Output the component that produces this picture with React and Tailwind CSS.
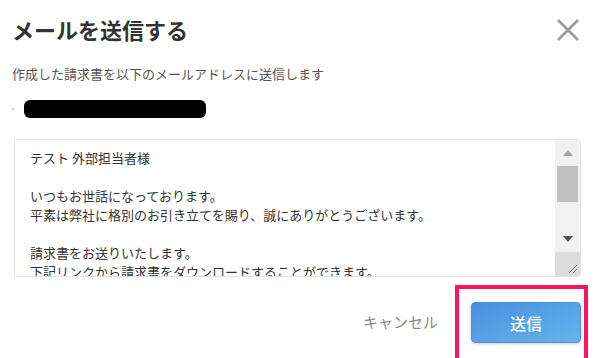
import React from "react";

const JP = { fontFamily: '"Noto Sans CJK JP", "Noto Sans", sans-serif' };

const BODY_LINES = [
  "テスト 外部担当者様",
  "",
  "いつもお世話になっております。",
  "平素は弊社に格別のお引き立てを賜り、誠にありがとうございます。",
  "",
  "請求書をお送りいたします。",
  "下記リンクから請求書をダウンロードすることができます。",
];

function CloseIcon() {
  return (
    <svg width="24" height="24" viewBox="0 0 24 24">
      <path d="M2 2 L22 22 M22 2 L2 22" stroke="#9a9a9a" strokeWidth="2.6" strokeLinecap="butt" />
    </svg>
  );
}

function FakeScrollbar() {
  return (
    <div className="flex w-[25px] flex-col bg-[#f1f1f1]">
      <div className="flex h-[26px] items-center justify-center">
        <svg width="10" height="6" viewBox="0 0 10 6"><path d="M0 6 L5 0 L10 6 Z" fill="#a3a3a3" /></svg>
      </div>
      <div className="mx-[2px] h-[36px] bg-[#c1c1c1]" />
      <div className="flex-1" />
      <div className="flex h-[26px] items-center justify-center">
        <svg width="10" height="6" viewBox="0 0 10 6"><path d="M0 0 L5 6 L10 0 Z" fill="#505050" /></svg>
      </div>
      <div className="relative h-[24px] bg-[#dcdcdc]">
        <svg className="absolute bottom-[2px] right-[2px]" width="12" height="12" viewBox="0 0 12 12">
          <path d="M11 3 L3 11 M11 7 L7 11" stroke="#777" strokeWidth="1" />
        </svg>
      </div>
    </div>
  );
}

export default function App() {
  return (
    <div className="relative h-[358px] w-[595px] overflow-hidden bg-white" style={JP}>
      <div className="flex h-full flex-col pl-[12px] pr-[14px] pt-[13px]">
        {/* header */}
        <div className="flex items-center justify-between">
          <h1 className="text-[22px] font-bold leading-[32px] text-[#333]">メールを送信する</h1>
          <button className="mr-[1px] mt-[2px]"><CloseIcon /></button>
        </div>

        <p className="mt-[19px] text-[13px] leading-[20px] text-[#555]">作成した請求書を以下のメールアドレスに送信します</p>

        {/* redacted address */}
        <div className="mt-[15px] flex h-[20px] items-center">
          <span className="h-[2px] w-[2px] rounded-full bg-[#bbb]" />
          <span className="ml-[10px] h-[18px] w-[182px] rounded-[6px] bg-black" />
        </div>

        {/* message box */}
        <div className="ml-[2px] mt-[20px] flex h-[138px] overflow-hidden rounded-[3px] border border-[#dfe5e5]">
          <div className="flex-1 overflow-hidden pl-[15px] pt-[8px] text-[13px] leading-[19px] text-[#333]">
            {BODY_LINES.map((l, i) => (
              <div key={i} className="h-[19px] whitespace-nowrap">{l}</div>
            ))}
          </div>
          <FakeScrollbar />
        </div>

        {/* footer */}
        <div className="mt-[25px] flex items-center justify-end gap-[33px]">
          <button className="text-[15px] text-[#888]">キャンセル</button>
          <button className="h-[41px] w-[110px] rounded-[4px] border border-[#4b8fdf] bg-gradient-to-br from-[#4a8ee0] to-[#65b5ea] text-[16px] font-medium text-white shadow-[0_1px_3px_rgba(0,0,0,0.2)]">
            送信
          </button>
        </div>
      </div>

      {/* highlight annotation */}
      <div className="absolute left-[455px] top-[285px] h-[80px] w-[133px] border-[4px] border-[#fc1460]" />
    </div>
  );
}
